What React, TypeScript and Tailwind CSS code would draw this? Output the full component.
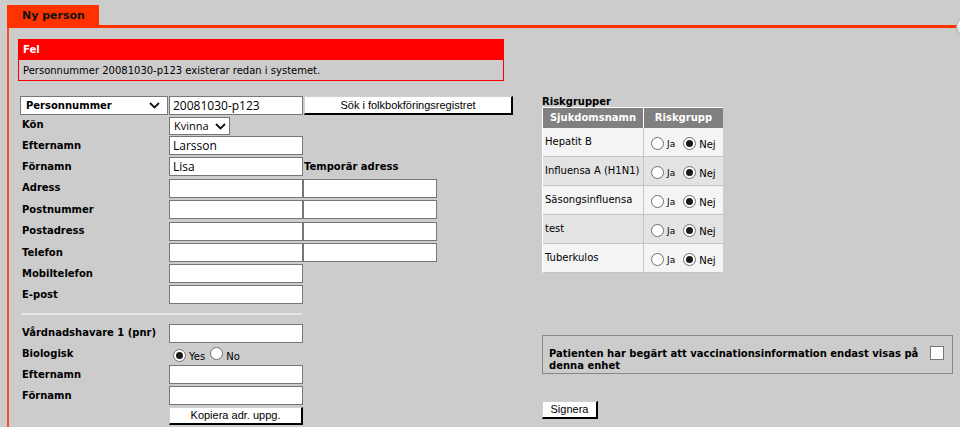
import React from 'react'

const label = "pl-[2px] w-[149px] shrink-0 text-[10px] font-bold leading-[12px]"

function Chevron() {
  return (
    <svg width="11" height="7" viewBox="0 0 11 7" className="shrink-0">
      <path d="M1 1l4.5 4.5L10 1" fill="none" stroke="#111" strokeWidth="1.8" />
    </svg>
  )
}

function Radio({ checked }: { checked?: boolean }) {
  return (
    <span className="inline-flex h-[13px] w-[13px] shrink-0 items-center justify-center rounded-full border border-[#6e6e6e] bg-white">
      {checked && <span className="h-[7px] w-[7px] rounded-full bg-[#1a1a1a]" />}
    </span>
  )
}

function Field({ value }: { value?: string }) {
  return (
    <div className="h-[19px] w-[134px] shrink-0 border border-[#767676] bg-white pl-[3px] font-['Open_Sans',sans-serif] text-[12px] leading-[17px]">
      {value}
    </div>
  )
}

function Button({ text, className }: { text: string; className: string }) {
  return (
    <div className={"flex items-center justify-center border-l border-t border-[#d0d0d0] border-r-2 border-b-2 border-r-black border-b-black bg-white font-['Liberation_Sans',Arial,sans-serif] text-[11px] leading-none " + className}>
      {text}
    </div>
  )
}

function Row({ name, h, children }: { name?: string; h: string; children?: React.ReactNode }) {
  return (
    <div className={"flex items-center " + h}>
      <div className={label}>{name}</div>
      {children}
    </div>
  )
}

const risks = ['Hepatit B', 'Influensa A (H1N1)', 'Säsongsinfluensa', 'test', 'Tuberkulos']

export default function App() {
  return (
    <div className="relative h-[427px] w-[960px] overflow-hidden bg-[#cccccc] font-['DejaVu_Sans',Verdana,sans-serif] text-black">
      {/* tab */}
      <div className="flex pl-[7px] pt-[5px]">
        <div className="h-[20px] w-[92px] bg-[#ff3300] pl-[15px] text-[11px] font-bold leading-[21px] text-[#111]">Ny person</div>
      </div>
      <div className="ml-[7px] mr-[3px] h-[3px] bg-[#ff3300]" />
      <div className="absolute left-[956px] top-[16px] h-[22px] w-[22px] rounded-full border border-[#aaa] bg-[radial-gradient(circle_at_35%_35%,#ffffff,#dcdcdc_60%,#9a9a9a)]" />

      <div className="ml-[7px] h-full border-l-2 border-[#f3502a] pl-[9px] pt-[11px]">
        {/* error */}
        <div className="w-[486px] border border-[#ff0000]">
          <div className="h-[20px] bg-[#ff0000] pl-[4px] text-[10px] font-bold leading-[20px] text-white">Fel</div>
          <div className="h-[20px] pl-[4px] text-[10px] leading-[21px]">Personnummer 20081030-p123 existerar redan i systemet.</div>
        </div>

        <div className="mt-[15px] flex">
          {/* left form */}
          <div className="w-[524px] shrink-0 pl-[2px]">
            <div className="flex h-[19px] items-start">
              <div className="mr-[1px] flex h-[19px] w-[148px] items-center justify-between border border-[#767676] bg-white pl-[5px] pr-[7px] text-[10px] font-bold">
                Personnummer
                <Chevron />
              </div>
              <Field value="20081030-p123" />
              <Button text="Sök i folkbokföringsregistret" className="ml-[1px] h-[19px] w-[209px]" />
            </div>
            <Row name="Kön" h="h-[20px]">
              <div className="mt-[2px] flex h-[18px] w-[61px] items-center justify-between border border-[#767676] bg-white pl-[4px] pr-[3px] font-['Open_Sans',sans-serif] text-[11px]">
                Kvinna
                <Chevron />
              </div>
            </Row>
            <Row name="Efternamn" h="h-[21px]"><Field value="Larsson" /></Row>
            <Row name="Förnamn" h="h-[21px]">
              <Field value="Lisa" />
              <div className="pl-[1px] text-[10px] font-bold">Temporär adress</div>
            </Row>
            <Row name="Adress" h="h-[22px]"><Field /><Field /></Row>
            <Row name="Postnummer" h="h-[21px]"><Field /><Field /></Row>
            <Row name="Postadress" h="h-[22px]"><Field /><Field /></Row>
            <Row name="Telefon" h="h-[21px]"><Field /><Field /></Row>
            <Row name="Mobiltelefon" h="h-[21px]"><Field /></Row>
            <Row name="E-post" h="h-[21px]"><Field /></Row>

            <div className="mt-[8px] ml-[1px] h-[2px] w-[281px] bg-[#e4e4e4]" />

            <div className="mt-[8px]">
              <Row name="Vårdnadshavare 1 (pnr)" h="h-[20px]"><Field /></Row>
              <Row name="Biologisk" h="h-[21px]">
                <div className="mt-[3px] flex items-center pl-[4px] text-[10px]">
                  <Radio checked />
                  <span className="ml-[3px] mt-[2px]">Yes</span>
                  <span className="ml-[5px]"><Radio /></span>
                  <span className="ml-[3px] mt-[2px]">No</span>
                </div>
              </Row>
              <Row name="Efternamn" h="h-[21px]"><Field /></Row>
              <Row name="Förnamn" h="h-[21px]"><Field /></Row>
              <Row h="h-[20px]">
                <Button text="Kopiera adr. uppg." className="h-[18px] w-[134px]" />
              </Row>
              <Row h="h-[21px]"><Field /></Row>
            </div>
          </div>

          {/* right column */}
          <div className="w-[411px] shrink-0">
            <div className="h-[11px] text-[10px] font-bold leading-[12px]">Riskgrupper</div>
            <div className="w-[181px] border-l border-t border-white">
              <div className="flex h-[20px] bg-[#808080] text-[10px] font-bold leading-[20px] text-white">
                <div className="w-[101px] border-r border-white text-center">Sjukdomsnamn</div>
                <div className="flex-1 text-center">Riskgrupp</div>
              </div>
              {risks.map((r, i) => (
                <div
                  key={r}
                  className={"flex h-[29px] border-b border-[#c4c4c4] text-[10px] " + (i % 2 === 0 ? 'bg-[#f4f4f4]' : 'bg-[#e3e3e3]')}
                >
                  <div className="flex w-[101px] items-center border-r border-[#c4c4c4] pb-[2px] pl-[2px]">{r}</div>
                  <div className="flex flex-1 items-center pl-[7px] pt-[3px]">
                    <Radio />
                    <span className="ml-[3px] mr-[8px] mt-[2px] text-[9px]">Ja</span>
                    <Radio checked />
                    <span className="ml-[3px] mt-[2px]">Nej</span>
                  </div>
                </div>
              ))}
            </div>

            <div className="mt-[62px] flex h-[39px] items-start justify-between border border-[#888] pl-[6px] pr-[8px]">
              <div className="w-[380px] pt-[12px] text-[10px] font-bold leading-[12px]">
                Patienten har begärt att vaccinationsinformation endast visas på denna enhet
              </div>
              <div className="mt-[10px] h-[14px] w-[14px] border border-[#767676] bg-white" />
            </div>

            <Button text="Signera" className="mt-[27px] h-[18px] w-[56px]" />
          </div>
        </div>
      </div>
    </div>
  )
}
